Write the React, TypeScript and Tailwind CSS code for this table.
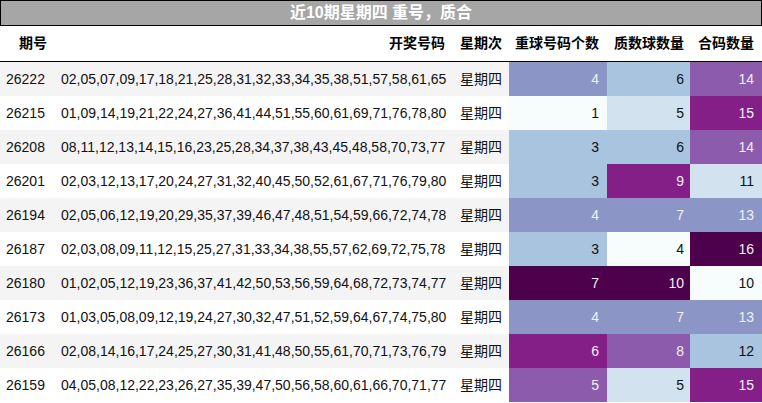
import React from 'react';

type Row = {
  issue: string;
  nums: string;
  day: string;
  repeat: number;
  prime: number;
  composite: number;
};

const rows: Row[] = [
  { issue: '26222', nums: '02,05,07,09,17,18,21,25,28,31,32,33,34,35,38,51,57,58,61,65', day: '星期四', repeat: 4, prime: 6, composite: 14 },
  { issue: '26215', nums: '01,09,14,19,21,22,24,27,36,41,44,51,55,60,61,69,71,76,78,80', day: '星期四', repeat: 1, prime: 5, composite: 15 },
  { issue: '26208', nums: '08,11,12,13,14,15,16,23,25,28,34,37,38,43,45,48,58,70,73,77', day: '星期四', repeat: 3, prime: 6, composite: 14 },
  { issue: '26201', nums: '02,03,12,13,17,20,24,27,31,32,40,45,50,52,61,67,71,76,79,80', day: '星期四', repeat: 3, prime: 9, composite: 11 },
  { issue: '26194', nums: '02,05,06,12,19,20,29,35,37,39,46,47,48,51,54,59,66,72,74,78', day: '星期四', repeat: 4, prime: 7, composite: 13 },
  { issue: '26187', nums: '02,03,08,09,11,12,15,25,27,31,33,34,38,55,57,62,69,72,75,78', day: '星期四', repeat: 3, prime: 4, composite: 16 },
  { issue: '26180', nums: '01,02,05,12,19,23,36,37,41,42,50,53,56,59,64,68,72,73,74,77', day: '星期四', repeat: 7, prime: 10, composite: 10 },
  { issue: '26173', nums: '01,03,05,08,09,12,19,24,27,30,32,47,51,52,59,64,67,74,75,80', day: '星期四', repeat: 4, prime: 7, composite: 13 },
  { issue: '26166', nums: '02,08,14,16,17,24,25,27,30,31,41,48,50,55,61,70,71,73,76,79', day: '星期四', repeat: 6, prime: 8, composite: 12 },
  { issue: '26159', nums: '04,05,08,12,22,23,26,27,35,39,47,50,56,58,60,61,66,70,71,77', day: '星期四', repeat: 5, prime: 5, composite: 15 },
];

// BuPu steps, lowest value first
const palette = [
  { bg: 'bg-[#f7fcfd]', fg: 'text-[#111]' },
  { bg: 'bg-[#d3e2ef]', fg: 'text-[#111]' },
  { bg: 'bg-[#a8c4df]', fg: 'text-[#111]' },
  { bg: 'bg-[#8c96c6]', fg: 'text-[#f1f1f1]' },
  { bg: 'bg-[#8c5bab]', fg: 'text-[#f1f1f1]' },
  { bg: 'bg-[#831f87]', fg: 'text-[#f1f1f1]' },
  { bg: 'bg-[#4d004b]', fg: 'text-[#f1f1f1]' },
];

const tone = (value: number, min: number) =>
  palette[Math.max(0, Math.min(palette.length - 1, value - min))];

const cols = 'grid grid-cols-[55px_397px_57px_98px_83px_72px]';
const sans = "font-['Liberation_Sans','Noto_Sans_CJK_SC',sans-serif]";

function HeatCell({ value, min, pad }: { value: number; min: number; pad: string }) {
  const t = tone(value, min);
  return (
    <div className={`flex items-center justify-end ${pad} ${t.bg} ${t.fg}`}>{value}</div>
  );
}

export default function App() {
  return (
    <div className={`w-[762px] h-[403px] overflow-hidden bg-white text-[14px] text-[#111] ${sans}`}>
      <div className="h-[26px] border border-black bg-[#a6a6a6] flex items-center justify-center text-[16px] font-bold text-white">
        近10期星期四 重号，质合
      </div>

      <div className={`${cols} h-[36px] border-b border-black font-bold text-black`}>
        <div className="flex items-center justify-end pr-2">期号</div>
        <div className="flex items-center justify-end pr-[7px]">开奖号码</div>
        <div className="flex items-center justify-end pr-[7px]">星期次</div>
        <div className="flex items-center justify-end pr-2">重球号码个数</div>
        <div className="flex items-center justify-end pr-[6px]">质数球数量</div>
        <div className="flex items-center justify-end pr-2">合码数量</div>
      </div>

      {rows.map((r, i) => (
        <div key={r.issue} className={`${cols} h-[34px] ${i % 2 === 0 ? 'bg-[#f4f4f4]' : 'bg-white'}`}>
          <div className="flex items-center pl-[6px]">{r.issue}</div>
          <div className="flex items-center pl-[6px] whitespace-nowrap">{r.nums}</div>
          <div className="flex items-center justify-end pr-[7px]">{r.day}</div>
          <HeatCell value={r.repeat} min={1} pad="pr-2" />
          <HeatCell value={r.prime} min={4} pad="pr-[6px]" />
          <HeatCell value={r.composite} min={10} pad="pr-2" />
        </div>
      ))}
    </div>
  );
}
